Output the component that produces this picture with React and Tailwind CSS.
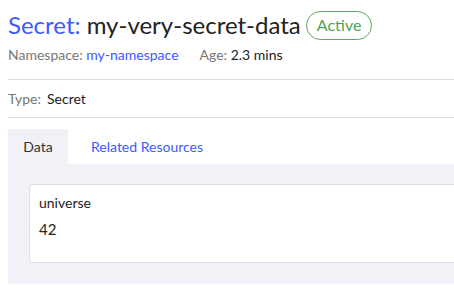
export default function App() {
  return (
    <div className="min-h-[295px] bg-white pl-2 text-[#222] font-['Lato',sans-serif]">
      {/* Header */}
      <div className="flex items-center gap-1 pt-[9px]">
        <h1 className="text-[24px] leading-[32px]">
          <span className="text-[#3d5afe]">Secret:</span> my-very-secret-data
        </h1>
        <span className="ml-[1px] flex h-[29px] items-center rounded-full border border-[#5da55f] px-[10px] text-[16px] text-[#52a054]">
          Active
        </span>
      </div>
      <div className="mt-[5px] flex items-center gap-[21px] text-[14px] leading-[18px]">
        <div>
          <span className="text-[#777]">Namespace:</span>{' '}
          <a className="text-[#3d5afe]">my-namespace</a>
        </div>
        <div>
          <span className="text-[#777]">Age:</span> 2.3 mins
        </div>
      </div>

      <div className="mt-[15px] border-t border-[#dcdee7]" />
      <div className="flex h-[37px] items-center gap-[6px] text-[14px]">
        <span className="text-[#777]">Type:</span>
        <span>Secret</span>
      </div>
      <div className="border-t border-[#dcdee7]" />

      {/* Tabs */}
      <div className="mt-[11px] flex text-[14px]">
        <div className="flex h-[35px] w-[60px] items-center justify-center bg-[#f1f2f7] text-[#333]">Data</div>
        <div className="flex h-[35px] items-center px-[23px] text-[#3d5afe]">Related Resources</div>
      </div>
      <div className="h-[120px] bg-[#f1f2f7] pl-[21px] pt-[20px]">
        <div className="h-[79px] rounded-l-[4px] border border-r-0 border-[#dcdee7] bg-white pl-[9px] pt-[9px]">
          <div className="text-[14px] leading-[18px]">universe</div>
          <div className="mt-[7px] text-[15px] leading-[20px]">42</div>
        </div>
      </div>
    </div>
  )
}
